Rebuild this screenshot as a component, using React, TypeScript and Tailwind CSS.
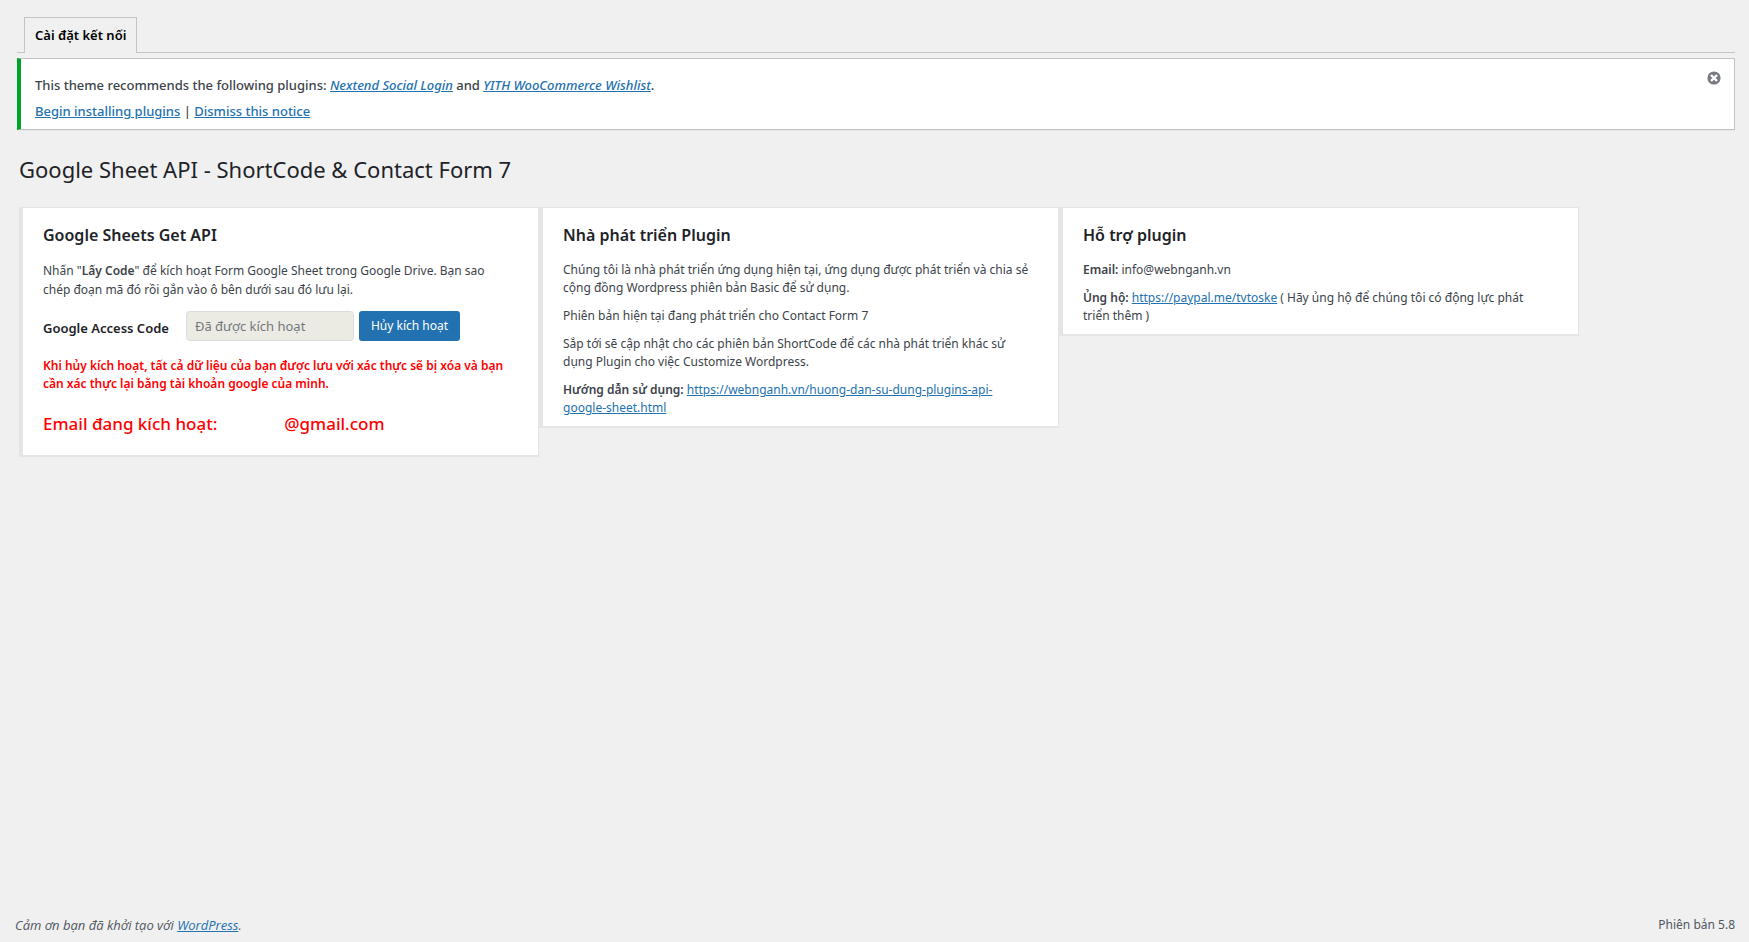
import type { ReactNode } from "react";

const link = "text-[#2271b1] underline";

function Card({ title, children }: { title: string; children: ReactNode }) {
  return (
    <section className="min-w-0 max-w-[520px] flex-1 border border-l-4 border-[#e5e5e5] bg-white pt-[15px] pr-[26px] pb-[9px] pl-5 shadow-[0_1px_1px_rgba(0,0,0,0.04)]">
      <h2 className="mb-[14px] text-base leading-6 font-semibold text-[#1d2327]">{title}</h2>
      {children}
    </section>
  );
}

export default function App() {
  return (
    <div className="flex min-h-screen flex-col bg-[#f0f0f1] font-['Noto_Sans','Open_Sans',sans-serif] text-xs leading-[18px] text-[#3c434a]">
      <main className="flex-1 pr-3.5 pl-[17px]">
        <nav className="flex border-b border-[#c3c4c7] pt-[17px] pl-[7px]">
          <a
            href="#"
            className="-mb-px border border-b-0 border-[#c3c4c7] bg-[#f0f0f1] px-2.5 pt-[5px] pb-[6px] text-[13px] leading-6 font-semibold text-black"
          >
            Cài đặt kết nối
          </a>
        </nav>

        <div className="mt-[5px] flex items-start justify-between border border-l-4 border-[#c3c4c7] border-l-[#00a32a] bg-white py-[9px] pr-3 pl-3.5 text-[13px] font-medium shadow-[0_1px_1px_rgba(0,0,0,0.04)]">
          <div>
            <p className="my-2 leading-[18px]">
              This theme recommends the following plugins:{" "}
              <a href="#" className={link}><em>Nextend Social Login</em></a> and{" "}
              <a href="#" className={link}><em>YITH WooCommerce Wishlist</em></a>.
            </p>
            <p className="leading-[18px]">
              <a href="#" className={link}>Begin installing plugins</a> |{" "}
              <a href="#" className={link}>Dismiss this notice</a>
            </p>
          </div>
          <button type="button" aria-label="Dismiss" className="mt-0.5">
            <svg width="16" height="16" viewBox="0 0 16 16" aria-hidden="true">
              <circle cx="8" cy="8" r="6.6" fill="#787c82" />
              <path d="M5 5l6 6M11 5l-6 6" stroke="#fff" strokeWidth="2.4" />
            </svg>
          </button>
        </div>

        <h1 className="mt-[23px] ml-0.5 text-[22px] leading-8 text-[#1d2327]">Google Sheet API - ShortCode &amp; Contact Form 7</h1>

        <div className="mt-[22px] ml-0.5 flex items-start">
          <Card title="Google Sheets Get API">
            <p className="leading-[19px]">
              Nhấn "<strong className="font-semibold">Lấy Code</strong>" để kích hoạt Form Google Sheet trong Google Drive. Bạn sao
              chép đoạn mã đó rồi gắn vào ô bên dưới sau đó lưu lại.
            </p>
            <form className="mt-3 flex items-center" onSubmit={(e) => e.preventDefault()}>
              <label htmlFor="code" className="mr-[17px] pt-1 text-[13px] font-semibold text-[#1d2327]">Google Access Code</label>
              <input
                id="code"
                disabled
                placeholder="Đã được kích hoạt"
                className="mr-[5px] h-[30px] w-[168px] rounded border border-[#dcdcde] bg-[#ebebe4] px-2 text-[13px] placeholder:text-[#75777b]"
              />
              <button type="submit" className="h-[30px] rounded-[3px] bg-[#2271b1] px-3 text-xs text-white">Hủy kích hoạt</button>
            </form>
            <p className="mt-4 font-semibold text-[#ff0000]">
              Khi hủy kích hoạt, tất cả dữ liệu của bạn được lưu với xác thực sẽ bị xóa và bạn cần xác thực lại bằng tài khoản google của mình.
            </p>
            <p className="mt-[19px] mb-[10px] flex gap-[67px] text-[17px] leading-6 font-medium text-[#ff0000]">
              <span>Email đang kích hoạt:</span>
              <span>@gmail.com</span>
            </p>
          </Card>
          <Card title="Nhà phát triển Plugin">
            <div className="flex flex-col gap-2.5">
              <p>
                Chúng tôi là nhà phát triển ứng dụng hiện tại, ứng dụng được phát triển và chia sẻ cộng đồng Wordpress phiên bản Basic để sử dụng.
              </p>
              <p>Phiên bản hiện tại đang phát triển cho Contact Form 7</p>
              <p>Sắp tới sẽ cập nhật cho các phiên bản ShortCode để các nhà phát triển khác sử dụng Plugin cho việc Customize Wordpress.</p>
              <p>
                <strong className="font-semibold">Hướng dẫn sử dụng:</strong>{" "}
                <a href="#" className={link}>https://webnganh.vn/huong-dan-su-dung-plugins-api-google-sheet.html</a>
              </p>
            </div>
          </Card>
          <Card title="Hỗ trợ plugin">
            <div className="flex flex-col gap-2.5">
              <p><strong className="font-semibold">Email:</strong> info@webnganh.vn</p>
              <p>
                <strong className="font-semibold">Ủng hộ:</strong> <a href="#" className={link}>https://paypal.me/tvtoske</a> ( Hãy ủng hộ để chúng tôi có động lực phát triển thêm )
              </p>
            </div>
          </Card>
        </div>
      </main>

      <footer className="flex justify-between pr-3.5 pb-2 pl-[15px] text-[#50575e]">
        <p className="font-['Open_Sans',sans-serif] text-[13px] leading-[18px] italic">
          Cảm ơn bạn đã khởi tạo với <a href="#" className={link}>WordPress</a>.
        </p>
        <p>Phiên bản 5.8</p>
      </footer>
    </div>
  );
}
